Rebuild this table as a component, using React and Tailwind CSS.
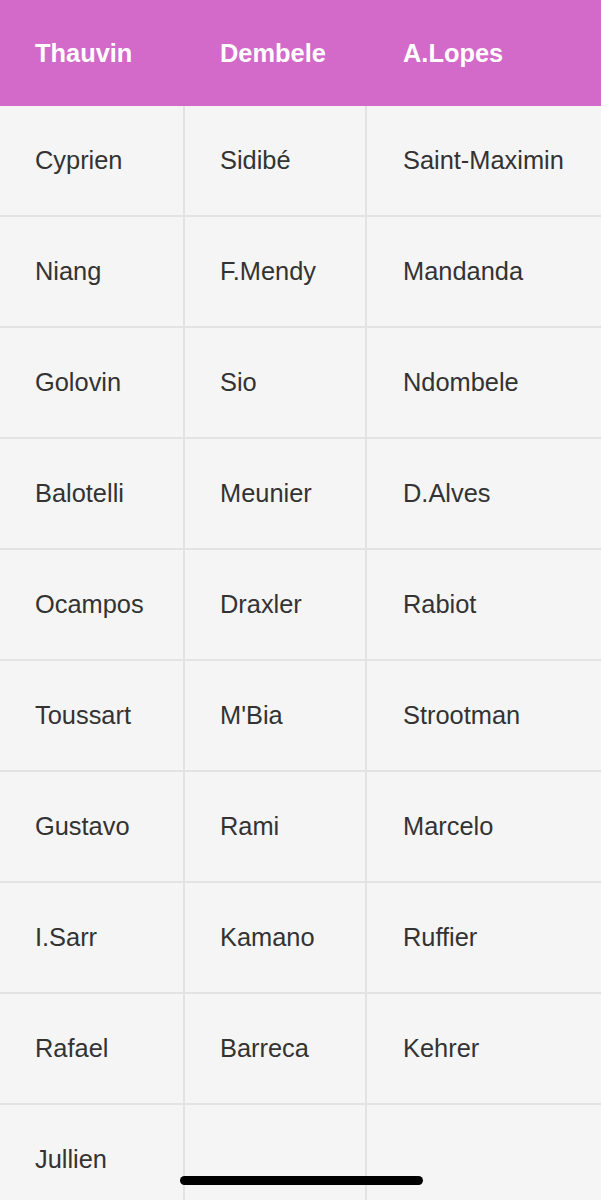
const headers = ['Thauvin', 'Dembele', 'A.Lopes'];

const rows = [
  ['Cyprien', 'Sidibé', 'Saint-Maximin'],
  ['Niang', 'F.Mendy', 'Mandanda'],
  ['Golovin', 'Sio', 'Ndombele'],
  ['Balotelli', 'Meunier', 'D.Alves'],
  ['Ocampos', 'Draxler', 'Rabiot'],
  ['Toussart', "M'Bia", 'Strootman'],
  ['Gustavo', 'Rami', 'Marcelo'],
  ['I.Sarr', 'Kamano', 'Ruffier'],
  ['Rafael', 'Barreca', 'Kehrer'],
  ['Jullien', '', ''],
];

export default function App() {
  return (
    <div className="relative h-[1200px] w-[601px] overflow-hidden bg-[#f5f5f5] font-['Liberation_Sans',Arial,sans-serif]">
      {/* Header */}
      <div className="grid h-[106px] grid-cols-[185px_182px_1fr] items-center bg-[#d36ac9]">
        {headers.map((h, j) => (
          <div key={h} className={`text-[25.4px] font-bold text-white ${j === 2 ? 'pl-[36px]' : 'pl-[35px]'}`}>
            {h}
          </div>
        ))}
      </div>

      {/* Body */}
      <div className="grid grid-cols-[185px_182px_1fr]">
        {rows.map((row, i) =>
          row.map((cell, j) => (
            <div
              key={`${i}-${j}`}
              className={`flex h-[111px] items-center border-b-2 border-[#e3e3e3] text-[25.4px] text-[#333333] ${
                j < 2 ? 'border-r-2 pl-[35px]' : 'pl-[36px]'
              }`}
            >
              {cell}
            </div>
          ))
        )}
      </div>

      {/* Home indicator */}
      <div className="absolute bottom-[15px] left-[180px] h-[9px] w-[243px] rounded-full bg-black" />
    </div>
  );
}
